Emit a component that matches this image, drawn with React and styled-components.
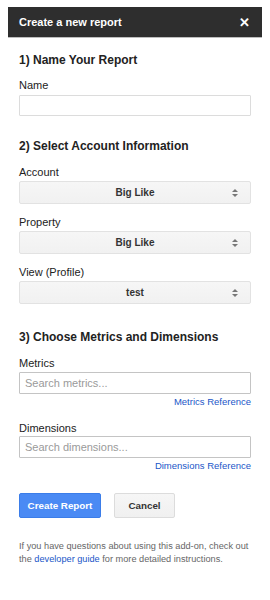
import React from "react";
import styled, { createGlobalStyle } from "styled-components";

const Global = createGlobalStyle`
  html, body { margin: 0; padding: 0; background: #fff; }
  body { font-family: "Liberation Sans", Arial, sans-serif; color: #222; }
  * { box-sizing: border-box; }
`;

const Panel = styled.div`
  width: 254px;
  margin: 7px 0 0 8px;
`;

const Header = styled.div`
  height: 31px;
  background: #2e2e2e;
  border-bottom: 1px solid #bdbdbd;
  display: flex;
  align-items: center;
  justify-content: space-between;
  padding: 0 11px;
  color: #fff;
  font-weight: bold;
  font-size: 11px;
`;

const Close = styled.span`
  font-size: 13px;
  font-weight: bold;
  line-height: 1;
  margin-right: 1px;
`;

const Body = styled.div`
  padding: 14px 11px 0 11px;
  display: flex;
  flex-direction: column;
`;

const Heading = styled.h2`
  margin: ${(p) => p.$top}px 0 0 0;
  font-size: 12px;
  line-height: 16px;
  font-weight: bold;
  color: #222;
`;

const Label = styled.label`
  display: block;
  margin-top: ${(p) => p.$top}px;
  font-size: 11px;
  line-height: 14px;
  color: #222;
`;

const TextInput = styled.input`
  display: block;
  width: 100%;
  height: ${(p) => p.$h}px;
  margin-top: ${(p) => p.$top}px;
  border: 1px solid ${(p) => (p.$dark ? "#c4c4c4" : "#dcdcdc")};
  border-radius: 1px;
  padding: 0 5px;
  font-family: "Liberation Sans", Arial, sans-serif;
  font-size: 11px;
  color: #222;
  background: #fff;
  outline: none;
  &::placeholder { color: #9a9a9a; }
`;

const Select = styled.div`
  position: relative;
  margin-top: 2px;
  height: 23px;
  border: 1px solid #e2e2e2;
  border-radius: 2px;
  background: linear-gradient(#f6f6f6, #f1f1f1);
  display: flex;
  align-items: center;
  justify-content: center;
  font-size: 10px;
  font-weight: bold;
  color: #333;
`;

const Arrows = styled.svg`
  position: absolute;
  right: 12px;
  top: 6px;
`;

const RefLink = styled.a`
  display: block;
  align-self: flex-end;
  margin-top: 2px;
  font-size: 9.5px;
  line-height: 12px;
  color: #1a56c8;
  text-decoration: none;
`;

const Buttons = styled.div`
  display: flex;
  gap: 13px;
  margin-top: 21px;
`;

const Button = styled.button`
  height: 25px;
  width: ${(p) => p.$w}px;
  border-radius: 2px;
  font-family: "Liberation Sans", Arial, sans-serif;
  font-size: 9.8px;
  font-weight: bold;
  padding: 0;
  cursor: pointer;
  color: ${(p) => (p.$primary ? "#fff" : "#333")};
  background: ${(p) => (p.$primary ? "#4a8af4" : "linear-gradient(#f6f6f6, #f0f0f0)")};
  border: 1px solid ${(p) => (p.$primary ? "#3b7de9" : "#dcdcdc")};
`;

const Footer = styled.p`
  margin: 22px -4px 0 0;
  font-size: 9.2px;
  line-height: 13px;
  color: #666;
  a { color: #1a56c8; text-decoration: none; }
`;

const SelectField = ({ value }) => (
  <Select>
    {value}
    <Arrows width="6" height="10" viewBox="0 0 6 10">
      <path d="M0 4 L3 1 L6 4 Z" fill="#777" />
      <path d="M0 6 L3 9 L6 6 Z" fill="#777" />
    </Arrows>
  </Select>
);

export default function App() {
  return (
    <>
      <Global />
      <Panel>
        <Header>
          <span>Create a new report</span>
          <Close>✕</Close>
        </Header>
        <Body>
          <Heading $top={0}>1) Name Your Report</Heading>
          <Label $top={10}>Name</Label>
          <TextInput $top={3} $h={21} />

          <Heading $top={22}>2) Select Account Information</Heading>
          <Label $top={11}>Account</Label>
          <SelectField value="Big Like" />
          <Label $top={11}>Property</Label>
          <SelectField value="Big Like" />
          <Label $top={11}>View (Profile)</Label>
          <SelectField value="test" />

          <Heading $top={25}>3) Choose Metrics and Dimensions</Heading>
          <Label $top={11}>Metrics</Label>
          <TextInput $top={2} $h={22} $dark placeholder="Search metrics..." />
          <RefLink href="#">Metrics Reference</RefLink>
          <Label $top={13}>Dimensions</Label>
          <TextInput $top={1} $h={22} $dark placeholder="Search dimensions..." />
          <RefLink href="#">Dimensions Reference</RefLink>

          <Buttons>
            <Button $primary $w={82}>Create Report</Button>
            <Button $w={61}>Cancel</Button>
          </Buttons>

          <Footer>
            If you have questions about using this add-on, check out the{" "}
            <a href="#">developer guide</a> for more detailed instructions.
          </Footer>
        </Body>
      </Panel>
    </>
  );
}
